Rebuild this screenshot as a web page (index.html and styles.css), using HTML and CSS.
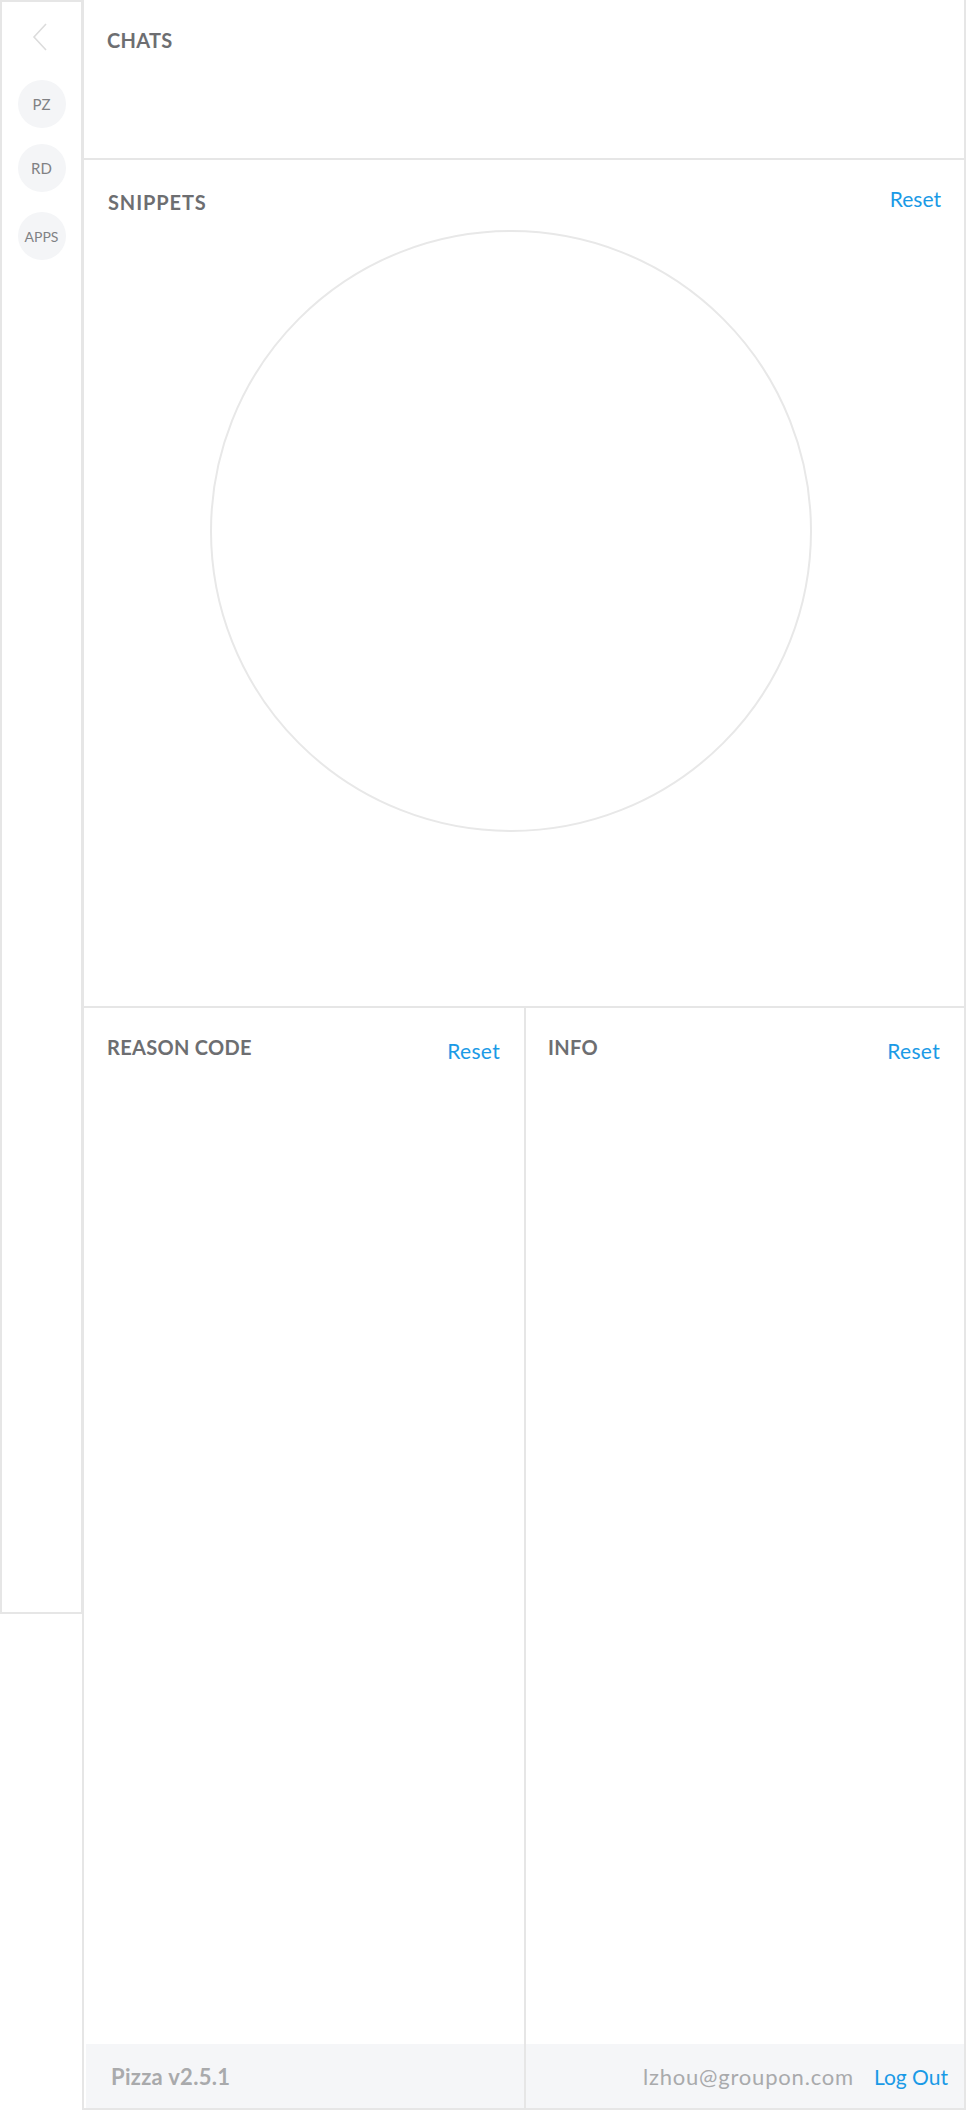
FILE: index.html
```html
<!DOCTYPE html>
<html>
<head>
<meta charset="utf-8">
<title>Pizza</title>
<link rel="stylesheet" href="styles.css">
</head>
<body>
<div class="App">
  <div class="SideBar">
    <a class="Back">
      <svg width="16" height="28" viewBox="0 0 16 28"><polyline points="14,1 2,14 14,27" fill="none" stroke="#dcdcdc" stroke-width="1.6"/></svg>
    </a>
    <a class="Bubble">PZ</a>
    <a class="Bubble">RD</a>
    <a class="Bubble Apps">APPS</a>
  </div>
  <div class="Main">
    <div class="Section Chats">
      <div class="Head"><span class="Title">CHATS</span></div>
    </div>
    <div class="Section Snippets">
      <div class="Head"><span class="Title">SNIPPETS</span><a class="Reset">Reset</a></div>
      <div class="CircleWrap"><div class="Circle"></div></div>
    </div>
    <div class="Bottom">
      <div class="Column Reason">
        <div class="Head"><span class="Title">REASON CODE</span><a class="Reset">Reset</a></div>
      </div>
      <div class="Column Info">
        <div class="Head"><span class="Title">INFO</span><a class="Reset">Reset</a></div>
      </div>
      <div class="Foot FootLeft"><span class="Version">Pizza v2.5.1</span></div>
      <div class="Foot FootRight"><span class="User">lzhou@groupon.com</span><a class="LogOut">Log Out</a></div>
    </div>
  </div>
</div>
</body>
</html>
```
FILE: styles.css
```css
body
{
    margin: 0;
    font-family: "Lato", "Open Sans", sans-serif;
    background: #fff;
}

a { cursor: pointer; }

div.App
{
    display: flex;
    align-items: flex-start;
    width: 966px;
}

div.SideBar
{
    box-sizing: border-box;
    width: 83px;
    height: 1614px;
    border: 2px solid #e6e6e6;
    display: flex;
    flex-direction: column;
    align-items: center;
    padding-top: 21px;
}

div.SideBar a.Back
{
    display: block;
    height: 28px;
    margin-left: -4px;
    margin-bottom: 29px;
}

div.SideBar a.Bubble
{
    display: flex;
    align-items: center;
    justify-content: center;
    width: 48px;
    height: 48px;
    border-radius: 50%;
    background: #f4f5f7;
    color: #808184;
    font-size: 15px;
    margin-bottom: 16px;
}

div.SideBar a.Apps
{
    margin-top: 4px;
    font-size: 14px;
}

div.Main
{
    box-sizing: border-box;
    flex: 1;
    margin-left: -1px;
    height: 2110px;
    border: 2px solid #e6e6e6;
    border-top: 0;
    display: flex;
    flex-direction: column;
}

div.Head
{
    display: flex;
    justify-content: space-between;
    align-items: center;
    height: 24px;
}

span.Title
{
    font-size: 20px;
    font-weight: 700;
    color: #6d6e71;
    letter-spacing: 0.3px;
}

a.Reset
{
    font-size: 21px;
    color: #1a9ae6;
}

div.Chats
{
    height: 160px;
    padding: 28px 23px 0;
    box-sizing: border-box;
    border-bottom: 2px solid #e6e6e6;
}

div.Snippets
{
    box-sizing: border-box;
    height: 848px;
    padding: 28px 23px 0 24px;
    border-bottom: 2px solid #e6e6e6;
}

div.Snippets div.Head { margin-top: 2px; }

div.Snippets span.Title { letter-spacing: 0.9px; }

div.Snippets a.Reset { margin-top: -7px; }

div.CircleWrap
{
    display: flex;
    justify-content: center;
    padding-right: 27px;
    margin-top: 16px;
}

div.Circle
{
    width: 598px;
    height: 598px;
    border: 2px solid #e8e8e8;
    border-radius: 50%;
}

div.Bottom
{
    flex: 1;
    display: grid;
    grid-template-columns: 442px 1fr;
    grid-template-rows: 1fr 64px;
}

div.Column
{
    padding: 27px 24px 0 23px;
}

div.Column a.Reset { margin-top: 6px; letter-spacing: 0.3px; }

div.Reason, div.FootLeft
{
    border-right: 2px solid #e6e6e6;
}

div.Info { padding-left: 22px; }

div.Foot
{
    background: #f5f6f8;
    display: flex;
    align-items: center;
}

div.FootLeft
{
    margin-left: 2px;
    padding-left: 25px;
}

div.FootRight
{
    justify-content: flex-end;
    padding-right: 16px;
}

span.Version
{
    font-size: 22px;
    font-weight: 700;
    color: #a9aaac;
    letter-spacing: 0.3px;
}

span.User
{
    font-size: 22px;
    color: #a9aaac;
    letter-spacing: 0.8px;
    margin-right: 20px;
}

a.LogOut
{
    font-size: 21px;
    color: #1a9ae6;
}
```
